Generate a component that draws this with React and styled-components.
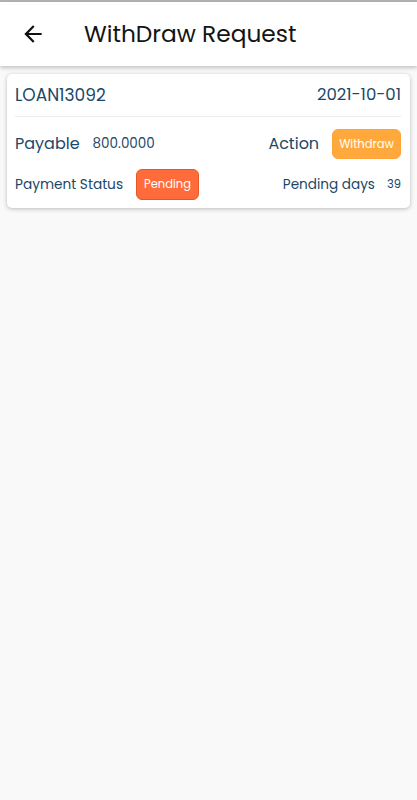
import React from "react";
import styled, { createGlobalStyle } from "styled-components";

const Global = createGlobalStyle`
  html, body { margin: 0; padding: 0; }
  body {
    background: #f9f9f9;
    font-family: Poppins, "Open Sans", "DejaVu Sans", sans-serif;
    -webkit-font-smoothing: antialiased;
  }
`;

const Page = styled.div`
  min-height: 800px;
  background: #f9f9f9;
`;

const StatusStrip = styled.div`
  height: 2px;
  background: #b3b3b3;
`;

const Header = styled.header`
  height: 64px;
  background: #fff;
  display: flex;
  align-items: center;
  padding-left: 19px;
  box-shadow: 0 2px 4px rgba(0, 0, 0, 0.22);
  position: relative;
  z-index: 1;
`;

const BackButton = styled.button`
  border: 0;
  background: none;
  padding: 0;
  width: 28px;
  height: 28px;
  display: flex;
  align-items: center;
  justify-content: center;
  color: #111;
  cursor: pointer;
`;

const Title = styled.h1`
  margin: 0 0 0 37px;
  font-size: 23.3px;
  font-weight: 400;
  color: #141414;
`;

const Content = styled.main`
  padding: 8px 7px;
`;

const Card = styled.section`
  background: #fff;
  border-radius: 5px;
  box-shadow: 0 1px 4px rgba(0, 0, 0, 0.25);
  padding: 0 9px 0 8px;
  color: #1c4767;
`;

const Row = styled.div`
  display: flex;
  align-items: center;
  justify-content: space-between;
  padding: ${(p) => p.$pad || "0"};
  border-bottom: ${(p) => (p.$divider ? "1px solid #ececec" : "none")};
  height: ${(p) => p.$h || "auto"};
  box-sizing: border-box;
`;

const Group = styled.div`
  display: flex;
  align-items: center;
  gap: ${(p) => p.$gap || "13px"};
`;

const Text = styled.span`
  font-size: ${(p) => p.$size || "14px"};
  font-weight: 400;
  color: #1b4868;
  line-height: 1;
`;

const Badge = styled.span`
  display: inline-flex;
  align-items: center;
  justify-content: center;
  height: ${(p) => p.$h || "30px"};
  padding: 0 ${(p) => p.$px || "7px"};
  border-radius: 6px;
  background: ${(p) => p.$bg};
  border: 1px solid ${(p) => p.$border};
  box-sizing: border-box;
  color: #fff;
  font-size: 11.5px;
  font-weight: 400;
`;

const ArrowBack = () => (
  <svg width="26" height="26" viewBox="0 0 24 24" aria-hidden="true">
    <path fill="currentColor" d="M20 11H7.83l5.59-5.59L12 4l-8 8 8 8 1.41-1.41L7.83 13H20v-2z" />
  </svg>
);

export default function App() {
  return (
    <Page>
      <Global />
      <StatusStrip />
      <Header>
        <BackButton aria-label="Back">
          <ArrowBack />
        </BackButton>
        <Title>WithDraw Request</Title>
      </Header>
      <Content>
        <Card>
          <Row $divider $h="43px">
            <Text $size="17px">LOAN13092</Text>
            <Text $size="16.5px">2021-10-01</Text>
          </Row>
          <Row $pad="12px 0 10px">
            <Group>
              <Text $size="16px">Payable</Text>
              <Text $size="13.5px">800.0000</Text>
            </Group>
            <Group>
              <Text $size="16px">Action</Text>
              <Badge $bg="#ffa83c" $border="#ffa33a" $px="6px">Withdraw</Badge>
            </Group>
          </Row>
          <Row $pad="0 0 8px">
            <Group>
              <Text $size="13.7px">Payment Status</Text>
              <Badge $bg="#ff6b3b" $border="#e8552a" $h="31px" $px="7px">Pending</Badge>
            </Group>
            <Group $gap="12px">
              <Text $size="13.6px">Pending days</Text>
              <Text $size="11.5px">39</Text>
            </Group>
          </Row>
        </Card>
      </Content>
    </Page>
  );
}
